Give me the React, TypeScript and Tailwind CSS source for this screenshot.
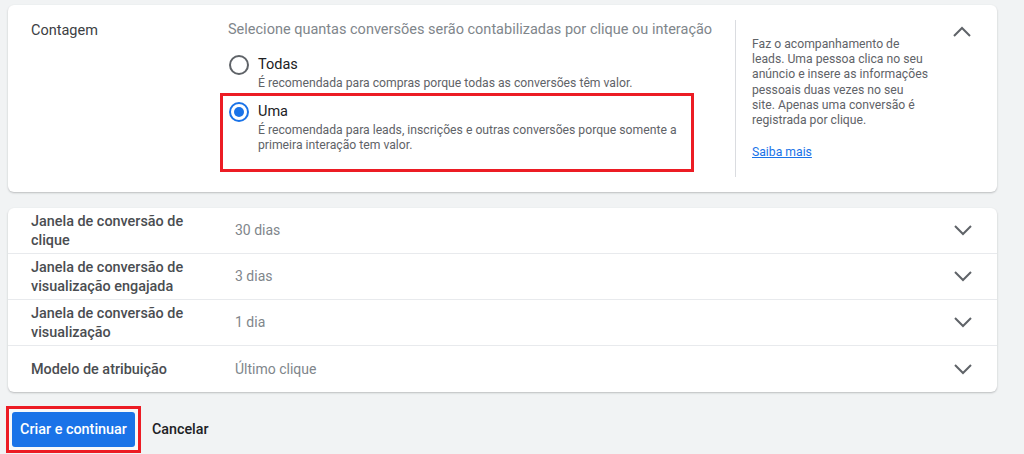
import React from "react";

const Chevron = ({ up = false }: { up?: boolean }) => (
  <svg width="18" height="11" viewBox="0 0 18 11" className="block">
    <path
      d={up ? "M1 10 L9 2 L17 10" : "M1 1 L9 9 L17 1"}
      fill="none"
      stroke="#5f6368"
      strokeWidth="2"
    />
  </svg>
);

const Radio = ({ checked }: { checked: boolean }) => (
  <div
    className={`w-[20px] h-[20px] rounded-full border-2 flex items-center justify-center shrink-0 ${
      checked ? "border-[#1a73e8]" : "border-[#5f6368]"
    }`}
  >
    {checked && <div className="w-[10px] h-[10px] rounded-full bg-[#1a73e8]" />}
  </div>
);

const rows: { label: string; value: string }[] = [
  { label: "Janela de conversão de clique", value: "30 dias" },
  { label: "Janela de conversão de visualização engajada", value: "3 dias" },
  { label: "Janela de conversão de visualização", value: "1 dia" },
  { label: "Modelo de atribuição", value: "Último clique" },
];

export default function App() {
  return (
    <div
      className="w-[1024px] h-[454px] bg-[#f1f3f4] pt-[5px] pl-[8px] overflow-hidden"
      style={{ fontFamily: "Roboto, 'Liberation Sans', sans-serif" }}
    >
      {/* Top card */}
      <div className="w-[989px] h-[187px] bg-white rounded-[6px] shadow-[0_1px_2px_rgba(60,64,67,0.3)] flex">
        <div className="w-[220px] pl-[23px] pt-[16px] text-[14.5px] leading-[20px] text-[#3c4043]">
          Contagem
        </div>
        <div className="w-[507px] pt-[15px]">
          <div className="text-[14.5px] leading-[20px] text-[#80868b] whitespace-nowrap">
            Selecione quantas conversões serão contabilizadas por clique ou interação
          </div>
          <div className="flex gap-[9px] pl-[1px] mt-[15px]">
            <div>
              <Radio checked={false} />
            </div>
            <div>
              <div className="text-[14.5px] leading-[20px] text-[#202124]">Todas</div>
              <div className="text-[12.2px] leading-[16px] text-[#5f6368]">
                É recomendada para compras porque todas as conversões têm valor.
              </div>
            </div>
          </div>
          <div className="-ml-[8px] mt-[2px] w-[474px] h-[79px] border-[3px] border-[#ec1c24] pl-[6px] pt-[6px] flex gap-[9px]">
            <div>
              <Radio checked={true} />
            </div>
            <div>
              <div className="text-[14.5px] leading-[20px] text-[#202124]">Uma</div>
              <div className="text-[12.2px] leading-[15px] text-[#5f6368] pt-[1px] w-[440px]">
                É recomendada para leads, inscrições e outras conversões porque somente a
                primeira interação tem valor.
              </div>
            </div>
          </div>
        </div>
        <div className="mt-[15px] mb-[15px] border-l border-[#dadce0] pl-[16px] w-[200px] pt-[17px]">
          <div className="text-[12.2px] leading-[15.2px] text-[#5f6368] w-[177px]">
            Faz o acompanhamento de leads. Uma pessoa clica no seu anúncio e insere as
            informações pessoais duas vezes no seu site. Apenas uma conversão é registrada
            por clique.
          </div>
          <div className="mt-[17px] text-[12.2px] leading-[15px] text-[#1a73e8] underline">
            Saiba mais
          </div>
        </div>
        <div className="pt-[21px] pl-[18px]">
          <Chevron up />
        </div>
      </div>

      {/* Lower card */}
      <div className="mt-[16px] w-[989px] bg-white rounded-[6px] shadow-[0_1px_2px_rgba(60,64,67,0.3)] flex flex-col divide-y divide-[#e8eaed]">
        {rows.map((r) => (
          <div key={r.label} className="h-[46px] flex items-center">
            <div className="w-[227px] pl-[23px]">
              <div className="max-w-[168px] text-[14.4px] leading-[19px] font-medium text-[#4a4d51]">
                {r.label}
              </div>
            </div>
            <div className="flex-1 text-[14px] text-[#80868b]">{r.value}</div>
            <div className="pr-[25px]">
              <Chevron />
            </div>
          </div>
        ))}
      </div>

      {/* Buttons */}
      <div className="mt-[14px] flex items-center">
        <div className="-ml-[2px] border-[3px] border-[#ec1c24] p-[3px] bg-[#f8f9fa]">
          <div className="w-[123px] h-[35px] bg-[#1a73e8] rounded-[3px] flex items-center justify-center text-white text-[14.4px] font-medium whitespace-nowrap">
            Criar e continuar
          </div>
        </div>
        <div className="ml-[11px] text-[14.3px] font-medium text-[#202124]">Cancelar</div>
      </div>
    </div>
  );
}
